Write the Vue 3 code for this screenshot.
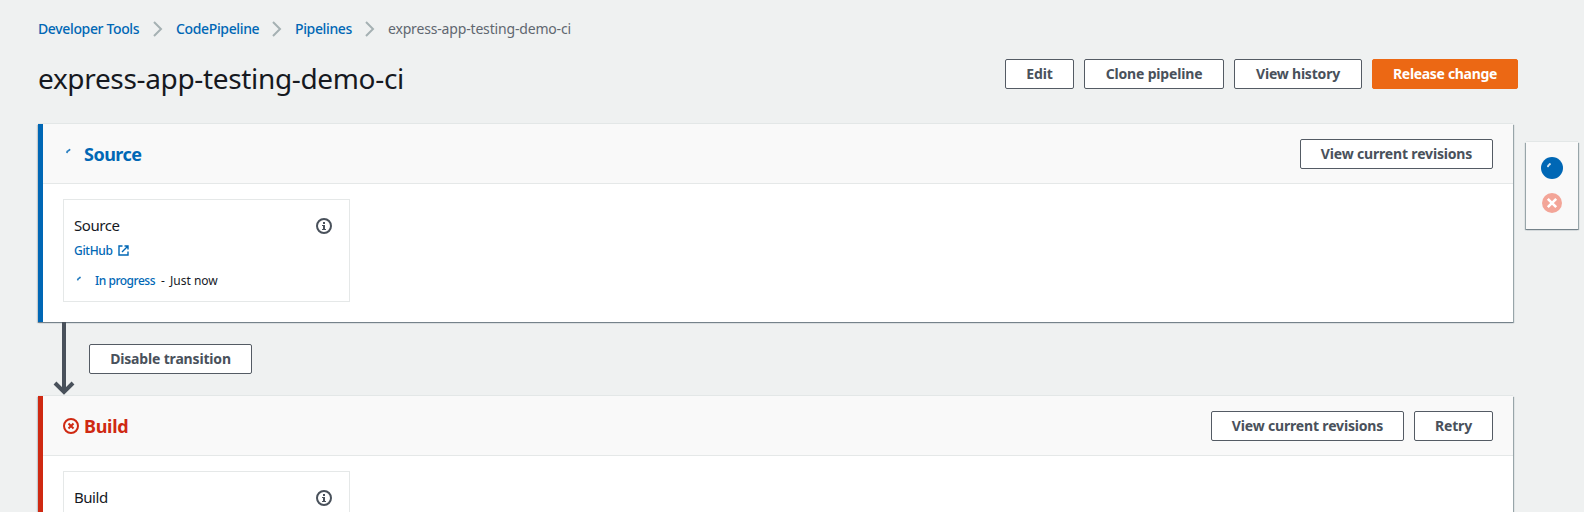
<script setup>
const crumbs = [
  { label: 'Developer Tools', cls: 'c-tools' },
  { label: 'CodePipeline', cls: 'c-code' },
  { label: 'Pipelines', cls: 'c-pipes' }
]
</script>

<template>
  <div class="page">
    <main class="main">
      <nav class="crumbs">
        <template v-for="c in crumbs" :key="c.label">
          <a :class="c.cls">{{ c.label }}</a>
          <svg class="chev" width="10" height="16" viewBox="0 0 10 16"><path d="M1 1l7 7-7 7" /></svg>
        </template>
        <span class="current">express-app-testing-demo-ci</span>
      </nav>

      <header class="title-row">
        <h1>express-app-testing-demo-ci</h1>
        <div class="actions">
          <button class="btn w-edit">Edit</button>
          <button class="btn w-clone">Clone pipeline</button>
          <button class="btn w-history">View history</button>
          <button class="btn primary w-release">Release change</button>
        </div>
      </header>

      <section class="stage progress">
        <div class="stage-head">
          <svg class="stage-icon" width="16" height="16" viewBox="0 0 16 16"><path class="spin" d="M4 6.200l.5-.9M5.600 4.600l1-.8" /></svg>
          <h2>Source</h2>
          <div class="actions">
            <button class="btn w-view">View current revisions</button>
          </div>
        </div>
        <div class="stage-body">
          <div class="action">
            <div class="action-top">
              <span class="name">Source</span>
              <svg class="info" width="16" height="16" viewBox="0 0 16 16">
                <circle cx="8" cy="8" r="7" />
                <path class="fill" d="M7 4h2v2H7zM6 7h3v4h1v1H6v-1h1V8H6z" />
              </svg>
            </div>
            <div class="provider">
              <a>GitHub</a>
              <svg class="ext" width="11" height="11" viewBox="0 0 11 11"><path d="M4.500 1H1v9h9V6.500M6.500 1H10v3.500M10 1L4 7" /></svg>
            </div>
            <div class="status">
              <svg class="status-icon" width="16" height="12" viewBox="0 0 16 12"><path class="spin" d="M3.800 4.600l.4-.7M5.200 3.100l.8-.6" /></svg>
              <a class="state">In progress</a><span class="dash">-</span><span class="when">Just now</span>
            </div>
          </div>
        </div>
      </section>

      <div class="transition">
        <svg class="arrow" width="22" height="73" viewBox="0 0 22 73"><path d="M11 0v70M2 61l9 9 9-9" /></svg>
        <button class="btn w-disable">Disable transition</button>
      </div>

      <section class="stage failed">
        <div class="stage-head">
          <svg class="stage-icon" width="16" height="16" viewBox="0 0 16 16">
            <circle cx="8" cy="8" r="7" />
            <path class="cross" d="M5.500 5.500l5 5M10.500 5.500l-5 5" />
          </svg>
          <h2>Build</h2>
          <div class="actions">
            <button class="btn w-view">View current revisions</button>
            <button class="btn w-retry">Retry</button>
          </div>
        </div>
        <div class="stage-body">
          <div class="action">
            <div class="action-top">
              <span class="name">Build</span>
              <svg class="info" width="16" height="16" viewBox="0 0 16 16">
                <circle cx="8" cy="8" r="7" />
                <path class="fill" d="M7 4h2v2H7zM6 7h3v4h1v1H6v-1h1V8H6z" />
              </svg>
            </div>
          </div>
        </div>
      </section>
    </main>

    <aside class="rail">
      <svg width="22" height="22" viewBox="0 0 22 22">
        <circle cx="11" cy="11" r="11" fill="#0067b5" />
        <path d="M7 9.200l.6-.9M8.400 7.500l.5-.4" stroke="#fff" stroke-width="2" stroke-linecap="round" fill="none" opacity=".85" />
      </svg>
      <svg width="20" height="20" viewBox="0 0 20 20">
        <circle cx="10" cy="10" r="10" fill="#f3a598" />
        <path d="M5.800 5.800l8.400 8.400M14.200 5.800l-8.400 8.400" stroke="#fff" stroke-width="2.600" fill="none" />
      </svg>
    </aside>
  </div>
</template>

<style>
body { background: #eff1f1; }
</style>

<style scoped>
.page {
  box-sizing: border-box;
  width: 1584px;
  height: 512px;
  overflow: hidden;
  display: flex;
  align-items: flex-start;
  background: #eff1f1;
  color: #16191f;
  font-family: "Noto Sans", "Open Sans", sans-serif;
}
.main { width: 1475px; margin-left: 38px; flex: none; }

.crumbs {
  display: flex;
  align-items: center;
  height: 20px;
  margin-top: 19px;
  font-size: 14px;
  line-height: 20px;
  white-space: nowrap;
}
.crumbs a { font-weight: 500; color: #0067b5; letter-spacing: -.36px; }
.c-tools { width: 102px; }
.c-code { width: 83px; }
.c-pipes { width: 57px; }
.chev { margin: 0 13px; fill: none; stroke: #a5b1b3; stroke-width: 2; }
.current { color: #5f6770; letter-spacing: -.17px; }

.title-row {
  display: flex;
  justify-content: space-between;
  height: 65px;
  margin-top: 20px;
  margin-right: -5px;
}
h1 {
  margin: 0;
  font-size: 28px;
  font-weight: 400;
  line-height: 38px;
  letter-spacing: -.34px;
  white-space: nowrap;
}
.actions { display: flex; gap: 10px; }
.btn {
  box-sizing: border-box;
  height: 30px;
  padding: 0;
  border: 1px solid #545b64;
  border-radius: 2px;
  background: #fff;
  color: #49515b;
  font: 700 14px/20px "Noto Sans", "Open Sans", sans-serif;
  letter-spacing: -.17px;
  text-align: center;
  white-space: nowrap;
}
.btn.primary { background: #ec6814; border-color: #ec6814; color: #fff; letter-spacing: -.32px; }
.w-edit { width: 69px; }
.w-clone { width: 140px; }
.w-history { width: 128px; letter-spacing: -.2px; }
.w-release { width: 146px; }
.w-view { width: 193px; }
.w-retry { width: 79px; }
.w-disable { width: 163px; }

.stage {
  box-sizing: border-box;
  height: 198px;
  border-left: 5px solid;
  background: #fff;
  box-shadow: 0 -1px 0 #e3e7e7, 0 1px 0 0 #75828a, 1px 1px 1px #98a5a9, -1px 1px 1px #c5cbce;
}
.progress { border-left-color: #0067b5; }
.failed { border-left-color: #cf2912; }
.stage-head {
  box-sizing: border-box;
  display: flex;
  align-items: center;
  height: 60px;
  padding: 0 20px;
  border-bottom: 1px solid #e5e8e8;
  background: #f9f9f9;
}
.stage-head .actions { margin-left: auto; }
.stage-icon { margin-right: 5px; fill: none; stroke-width: 2; stroke: currentColor; }
.progress .stage-icon, .progress h2 { color: #0067b5; }
.failed .stage-icon, .failed h2 { color: #cf2912; }
.spin { fill: none; stroke: #2a7fc0; stroke-width: 1.8; stroke-linecap: round; }
h2 { margin: 0; font-size: 18px; line-height: 24px; letter-spacing: -.5px; }
.failed h2 { letter-spacing: -.3px; }

.stage-body { padding: 15px 20px; }
.action {
  box-sizing: border-box;
  width: 287px;
  height: 103px;
  padding: 15px 17px 0 10px;
  border: 1px solid #e5e8e8;
}
.action-top { display: flex; justify-content: space-between; align-items: center; height: 22px; }
.name { margin-top: -2px; font-size: 15px; line-height: 22px; letter-spacing: -.45px; }
.info { fill: none; stroke: #49515b; stroke-width: 2; }
.info .fill { fill: #49515b; stroke: none; }
.provider { display: flex; align-items: center; height: 18px; margin-top: 5px; font-size: 12px; line-height: 18px; }
.provider a { width: 44px; color: #0067b5; font-weight: 500; letter-spacing: -.3px; }
.ext { margin-top: -2px; fill: none; stroke: #0067b5; stroke-width: 1.4; }
.status { display: flex; align-items: center; height: 18px; margin-top: 12px; font-size: 12px; line-height: 18px; white-space: nowrap; }
.status-icon { margin-right: 5px; }
.state { width: 66px; color: #0067b5; font-weight: 500; letter-spacing: -.48px; }
.dash { width: 9px; }
.when { letter-spacing: 0; }

.transition { display: flex; height: 74px; }
.arrow { margin: 0 0 0 14.5px; fill: none; stroke: #49515b; stroke-width: 4; }
.transition .btn { margin: 22px 0 0 14.5px; }

.rail {
  box-sizing: border-box;
  display: flex;
  flex-direction: column;
  align-items: center;
  gap: 14px;
  width: 52px;
  height: 87px;
  margin: 142px 0 0 13px;
  padding-top: 14.5px;
  background: #f9f9f9;
  box-shadow: 0 -1px 0 #e3e7e7, 0 1px 0 0 #75828a, 1px 1px 1px #98a5a9, -1px 1px 1px #98a5a9;
}
</style>
